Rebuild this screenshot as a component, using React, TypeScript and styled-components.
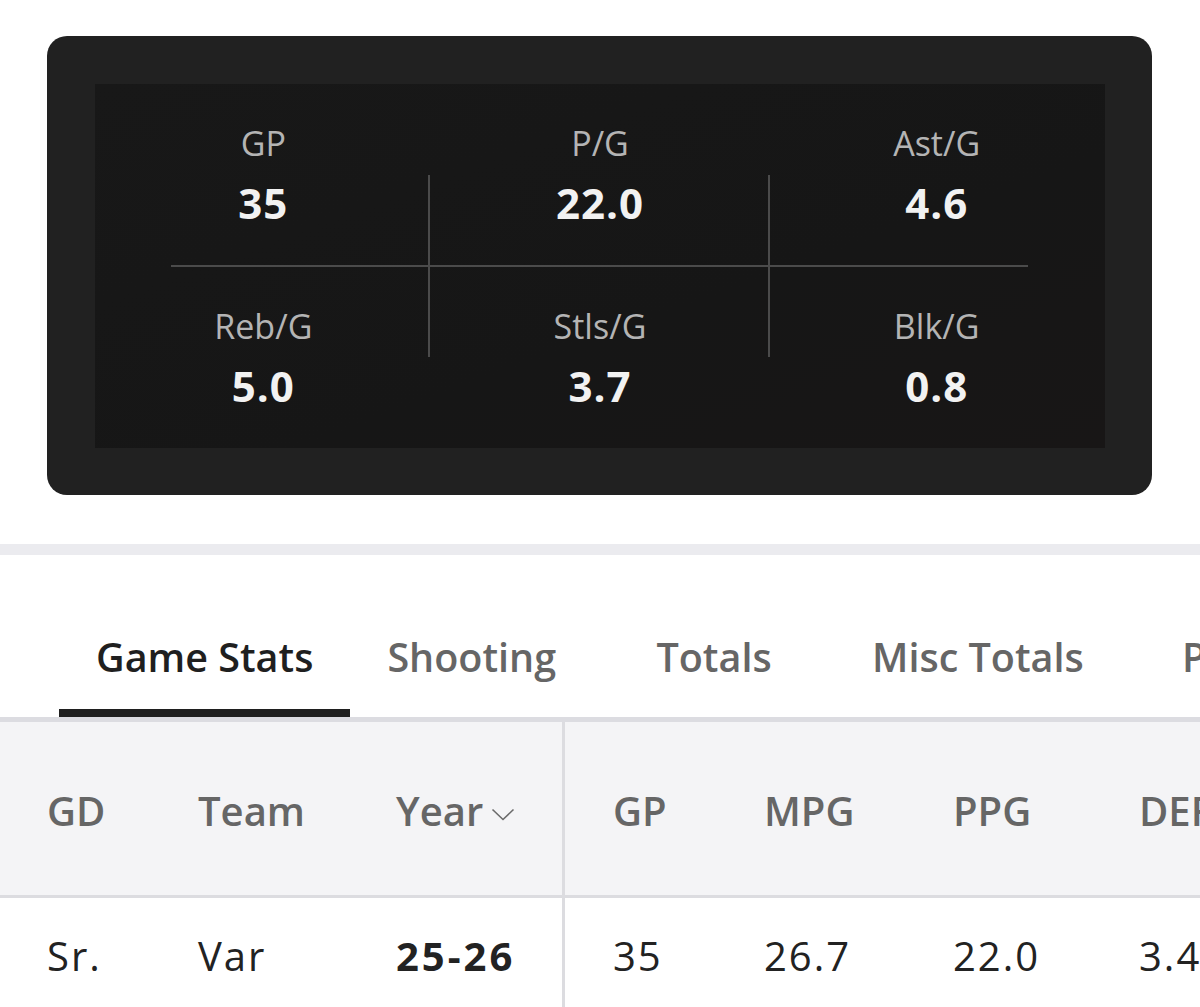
import React from "react";
import styled, { createGlobalStyle } from "styled-components";

const Global = createGlobalStyle`
  html, body { margin: 0; padding: 0; background: #ffffff; }
  body { font-family: "Open Sans", "Noto Sans", sans-serif; overflow: hidden; width: 1200px; }
  * { box-sizing: border-box; }
`;

const Page = styled.div`
  width: 1200px;
  padding-top: 36px;
  overflow: hidden;
`;

const StatCard = styled.section`
  width: 1105px;
  margin-left: 47px;
  padding: 48px 47px 47px 48px;
  background: #212121;
  border-radius: 20px;
`;

const Panel = styled.div`
  background: linear-gradient(160deg, #181818 0%, #161616 60%, #181616 100%);
  display: flex;
  flex-direction: column;
`;

const StatRow = styled.div`
  display: grid;
  grid-template-columns: repeat(3, 1fr);
`;

const StatCell = styled.div<{ $pos: "top" | "bottom"; $divider: number | null }>`
  position: relative;
  padding: 37px 0;
  text-align: center;
  display: flex;
  flex-direction: column;
  align-items: center;
  gap: 13px;

  &::after {
    content: "";
    display: ${(p) => (p.$divider === null ? "none" : "block")};
    position: absolute;
    right: ${(p) => p.$divider ?? 0}px;
    width: 2px;
    background: #4b4b4b;
    top: ${(p) => (p.$pos === "top" ? "91px" : "0")};
    bottom: ${(p) => (p.$pos === "top" ? "0" : "91px")};
  }
`;

const StatLabel = styled.div`
  font-size: 34px;
  line-height: 44px;
  font-weight: 400;
  color: #b4b4b4;
`;

const StatValue = styled.div`
  font-size: 42px;
  line-height: 50px;
  font-weight: 700;
  letter-spacing: 1px;
  color: #f2f2f2;
`;

const Rule = styled.div`
  height: 2px;
  margin: 0 77px 0 76px;
  background: #4b4b4b;
`;

const Band = styled.div`
  height: 11px;
  margin-top: 49px;
  background: #ebebef;
`;

const TabBar = styled.nav`
  display: flex;
  padding-left: 59px;
  border-bottom: 5px solid #dcdce1;
  white-space: nowrap;
  overflow: hidden;
`;

const Tab = styled.div<{ $active?: boolean }>`
  flex: none;
  min-width: 242px;
  padding: 78px 37px 28px;
  text-align: center;
  font-size: 39.5px;
  line-height: 48px;
  font-weight: 600;
  color: ${(p) => (p.$active ? "#1f1f1f" : "#666666")};
  border-bottom: 8px solid ${(p) => (p.$active ? "#1f1f1f" : "transparent")};
`;

const TableWrap = styled.div`
  width: 1200px;
  overflow: hidden;
`;

const Grid = styled.div<{ $head?: boolean }>`
  display: grid;
  grid-template-columns: 151px 198px 216px 151px 189px 186px 200px;
  width: 1291px;
  background: ${(p) => (p.$head ? "#f4f4f6" : "#ffffff")};
  border-bottom: ${(p) => (p.$head ? "3px solid #dcdce0" : "none")};
`;

const Cell = styled.div<{ $head?: boolean; $bold?: boolean; $split?: boolean; $wide?: boolean }>`
  display: flex;
  align-items: center;
  padding: ${(p) => (p.$head ? "65px 0 60px" : "34px 0 40px")};
  padding-left: ${(p) => (p.$wide ? "48px" : "47px")};
  font-size: 40px;
  line-height: 48px;
  font-weight: ${(p) => (p.$head ? 600 : p.$bold ? 700 : 400)};
  letter-spacing: ${(p) => (p.$head ? "0" : p.$bold ? "3px" : "2px")};
  color: ${(p) => (p.$head ? "#666666" : "#222222")};
  border-right: ${(p) => (p.$split ? "3px solid #dcdce0" : "none")};
  white-space: nowrap;
`;

const Chevron = styled.svg`
  margin-left: 8px;
  margin-top: 6px;
  flex: none;
`;

const stats = [
  [
    { label: "GP", value: "35" },
    { label: "P/G", value: "22.0" },
    { label: "Ast/G", value: "4.6" },
  ],
  [
    { label: "Reb/G", value: "5.0" },
    { label: "Stls/G", value: "3.7" },
    { label: "Blk/G", value: "0.8" },
  ],
];

const dividerOffsets: (number | null)[] = [2, -2, null];

const tabs = ["Game Stats", "Shooting", "Totals", "Misc Totals", "Per 40"];

const head = ["GD", "Team", "Year", "GP", "MPG", "PPG", "DEF"];
const row = ["Sr.", "Var", "25-26", "35", "26.7", "22.0", "3.4"];

export default function App() {
  return (
    <>
      <Global />
      <Page>
        <StatCard>
          <Panel>
            <StatRow>
              {stats[0].map((s, i) => (
                <StatCell key={s.label} $pos="top" $divider={dividerOffsets[i]}>
                  <StatLabel>{s.label}</StatLabel>
                  <StatValue>{s.value}</StatValue>
                </StatCell>
              ))}
            </StatRow>
            <Rule />
            <StatRow>
              {stats[1].map((s, i) => (
                <StatCell key={s.label} $pos="bottom" $divider={dividerOffsets[i]}>
                  <StatLabel>{s.label}</StatLabel>
                  <StatValue>{s.value}</StatValue>
                </StatCell>
              ))}
            </StatRow>
          </Panel>
        </StatCard>
        <Band />
        <TabBar>
          {tabs.map((t, i) => (
            <Tab key={t} $active={i === 0}>
              {t}
            </Tab>
          ))}
        </TabBar>
        <TableWrap>
          <Grid $head>
            {head.map((h, i) => (
              <Cell key={h} $head $split={i === 2} $wide={i > 2}>
                {h}
                {h === "Year" && (
                  <Chevron width="24" height="13" viewBox="0 0 24 13">
                    <polyline
                      points="1.5,1.5 12,11.5 22.5,1.5"
                      fill="none"
                      stroke="#6b6b6b"
                      strokeWidth="1.6"
                    />
                  </Chevron>
                )}
              </Cell>
            ))}
          </Grid>
          <Grid>
            {row.map((v, i) => (
              <Cell key={i} $bold={i === 2} $split={i === 2} $wide={i > 2}>
                {v}
              </Cell>
            ))}
          </Grid>
        </TableWrap>
      </Page>
    </>
  );
}
